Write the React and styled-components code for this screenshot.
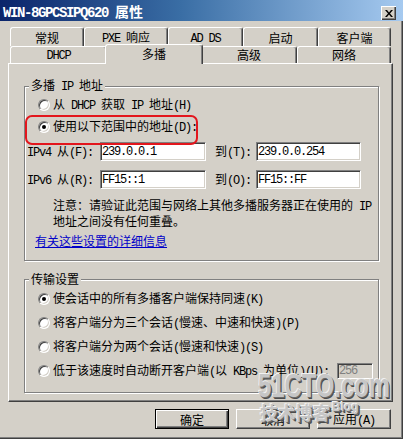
import React from "react";
import styled, { createGlobalStyle, css } from "styled-components";

const GlobalStyle = createGlobalStyle`
  html, body {
    margin: 0;
    padding: 0;
    background: #d4d0c8;
  }
  body {
    font-family: "Noto Sans CJK SC", "Liberation Sans", sans-serif;
    font-size: 12px;
    line-height: 14px;
    color: #000;
  }
`;

// latin runs are drawn half-width, like the old bitmap song font
const Latin = styled.span`
  font-family: "Liberation Mono", "DejaVu Sans Mono", monospace;
  letter-spacing: -0.1em;
`;

const asciiRun = /([\x20-\x7e]+)/;
const mix = (str) =>
  str
    .split(asciiRun)
    .filter(Boolean)
    .map((part, i) =>
      asciiRun.test(part) ? (
        <Latin key={i}>{part}</Latin>
      ) : (
        <React.Fragment key={i}>{part}</React.Fragment>
      )
    );

const Window = styled.div`
  position: relative;
  width: 403px;
  height: 439px;
  box-sizing: border-box;
  background: #d4d0c8;
  display: flex;
  flex-direction: column;
  overflow: hidden;
  box-shadow: inset -1px -1px 0 #404040, inset -2px -2px 0 #808080;
`;

const TitleBar = styled.div`
  height: 21px;
  box-sizing: border-box;
  padding: 3px 0 0 3px;
  display: flex;
  align-items: center;
  justify-content: space-between;
  background: linear-gradient(to right, #0a246a 0%, #3a6ea5 45%, #a6caf0 100%);
  color: #fff;
  font-weight: bold;
  font-size: 14px;
`;

const CloseButton = styled.div`
  width: 15px;
  height: 14px;
  margin: 2px 7px 0 0;
  box-sizing: border-box;
  display: flex;
  align-items: center;
  justify-content: center;
  background: #d4d0c8;
  box-shadow: inset 1px 1px 0 #fff, inset -1px -1px 0 #404040,
    inset -2px -2px 0 #808080;
`;

const Body = styled.div`
  padding: 6px 10px 0 8px;
  display: flex;
  flex-direction: column;
`;

const TabStrip = styled.div`
  padding: 0 2px;
  display: flex;
  flex-direction: column;
`;

const TabRow = styled.div`
  display: flex;
  height: ${(p) => p.$h}px;
`;

const Tab = styled.div`
  box-sizing: border-box;
  width: ${(p) => p.$w}px;
  height: 100%;
  display: flex;
  align-items: center;
  justify-content: center;
  padding-top: ${(p) => p.$pt || 0}px;
  background: #d4d0c8;
  border: 1px solid #fff;
  border-bottom: none;
  border-right-color: #404040;
  border-radius: 3px 3px 0 0;
  box-shadow: inset -1px 0 0 #808080;
  white-space: pre;
  ${(p) =>
    p.$active &&
    css`
      position: relative;
      z-index: 1;
      margin: -2px -2px 0;
      height: calc(100% + 3px);
      padding-bottom: 2px;
    `}
`;

const Panel = styled.div`
  box-sizing: border-box;
  width: 385px;
  height: 339px;
  padding: 14px 0 0 15px;
  border: 1px solid #fff;
  border-right-color: #404040;
  border-bottom-color: #404040;
  box-shadow: inset -1px -1px 0 #808080;
`;

const GroupBox = styled.fieldset`
  box-sizing: border-box;
  width: 355px;
  margin: ${(p) => p.$mt || 0}px 0 0;
  padding: ${(p) => p.$pt || 0}px 0 ${(p) => p.$pb}px 2px;
  border: 1px solid #808080;
  box-shadow: 1px 1px 0 #fff, inset 1px 1px 0 #fff;
  min-inline-size: 0;
`;

const Legend = styled.legend`
  margin-left: 2px;
  padding: 0 2px;
  background: #d4d0c8;
  line-height: 14px;
`;

const RadioRow = styled.div`
  position: relative;
  display: flex;
  align-items: center;
  height: ${(p) => p.$h}px;
  padding-left: 11px;
`;

const RadioDot = styled.span`
  box-sizing: border-box;
  flex: none;
  width: 12px;
  height: 12px;
  margin-right: 3px;
  border-radius: 50%;
  background: #fff;
  border: 1px solid;
  border-color: #808080 #fff #fff #808080;
  box-shadow: inset 1px 1px 0 #404040, inset -1px -1px 0 #d4d0c8;
  display: flex;
  align-items: center;
  justify-content: center;
  &::after {
    content: "";
    width: 4px;
    height: 4px;
    border-radius: 50%;
    background: ${(p) => (p.$checked ? "#000" : "transparent")};
  }
`;

const RedMark = styled.div`
  position: absolute;
  left: -2px;
  top: -1px;
  width: 173px;
  height: 30px;
  box-sizing: border-box;
  border: 2px solid #e3161d;
  border-radius: 7px;
  pointer-events: none;
`;

const FieldRow = styled.div`
  display: flex;
  align-items: center;
  height: 19px;
  margin-top: ${(p) => p.$mt}px;
`;

const FieldLabel = styled.span`
  flex: none;
  width: ${(p) => p.$w}px;
  margin-left: ${(p) => p.$ml || 0}px;
`;

const TextBox = styled.input`
  box-sizing: border-box;
  width: ${(p) => p.$w}px;
  height: ${(p) => p.$h || 19}px;
  margin: 0 0 0 ${(p) => p.$ml || 0}px;
  padding: 0 1px;
  font-family: "Liberation Mono", "DejaVu Sans Mono", monospace;
  font-size: 12px;
  letter-spacing: -1.2px;
  color: #000;
  background: #fff;
  border: 1px solid;
  border-color: #808080 #fff #fff #808080;
  box-shadow: inset 1px 1px 0 #404040, inset -1px -1px 0 #d4d0c8;
  outline: none;
  &:disabled {
    color: #808080;
    background: #d4d0c8;
  }
`;

const Note = styled.p`
  margin: 9px 0 0 26px;
  line-height: 14px;
`;

const HelpLink = styled.a`
  display: block;
  margin: 6px 0 0 8px;
  line-height: 14px;
  color: #0000c8;
  text-decoration: underline;
  cursor: pointer;
`;

const ButtonRow = styled.div`
  display: flex;
  justify-content: flex-end;
  gap: 7px;
  margin-top: 7px;
  padding-right: 2px;
`;

const Button = styled.button`
  box-sizing: border-box;
  width: 74px;
  height: 20px;
  padding: 0;
  font-family: "Noto Sans CJK SC", "Liberation Sans", sans-serif;
  font-size: 12px;
  color: #000;
  background: #d4d0c8;
  border: 1px solid;
  border-color: #fff #404040 #404040 #fff;
  box-shadow: inset -1px -1px 0 #808080;
  ${(p) =>
    p.$default &&
    css`
      border-color: #000;
      box-shadow: inset 1px 1px 0 #fff, inset -1px -1px 0 #404040,
        inset -2px -2px 0 #808080;
    `}
`;

const Watermark = styled.div`
  position: absolute;
  pointer-events: none;
  font-weight: bold;
  line-height: 1;
  white-space: nowrap;
  color: #c6c6c6;
  text-shadow: -1px -1px 0 #f2f2f2, 1px 1px 0 #6a6a6a, 2px 2px 0 #4c4c4c;
`;

const SiteMark = styled(Watermark)`
  left: 258px;
  top: 368px;
  font-family: "Liberation Sans", sans-serif;
  font-size: 34px;
  transform: scaleX(0.7);
  transform-origin: left top;
`;

const BlogMark = styled(Watermark)`
  left: 260px;
  top: 403px;
  font-size: 18px;
  letter-spacing: -0.5px;
`;

const BlogWord = styled(Watermark)`
  left: 332px;
  top: 401px;
  font-family: "Liberation Sans", sans-serif;
  font-size: 12px;
`;

const tabsTop = [
  { label: "常规", w: 74 },
  { label: "PXE 响应", w: 84 },
  { label: "AD DS", w: 75 },
  { label: "启动", w: 75 },
  { label: "客户端", w: 73 },
];

const tabsBottom = [
  { label: "DHCP", w: 97 },
  { label: "多播", w: 98, active: true },
  { label: "高级", w: 96 },
  { label: "网络", w: 94 },
];

const transferOptions = [
  { label: "使会话中的所有多播客户端保持同速(K)", checked: true },
  { label: "将客户端分为三个会话(慢速、中速和快速)(P)" },
  { label: "将客户端分为两个会话(慢速和快速)(S)" },
  { label: "低于该速度时自动断开客户端(以 KBps 为单位)(U):", limit: "256" },
];

const App = () => (
  <Window>
    <GlobalStyle />
    <TitleBar>
      <span>{mix("WIN-8GPCSIPQ620 属性")}</span>
      <CloseButton>
        <svg width="8" height="7" viewBox="0 0 8 7">
          <path d="M0 0h2l2 2.4L6 0h2L5 3.5 8 7H6L4 4.6 2 7H0l3-3.5z" fill="#000" />
        </svg>
      </CloseButton>
    </TitleBar>

    <Body>
      <TabStrip>
        <TabRow $h={19}>
          {tabsTop.map((t) => (
            <Tab key={t.label} $w={t.w} $pt={2}>
              <span>{mix(t.label)}</span>
            </Tab>
          ))}
        </TabRow>
        <TabRow $h={17}>
          {tabsBottom.map((t) => (
            <Tab key={t.label} $w={t.w} $active={t.active}>
              <span>{mix(t.label)}</span>
            </Tab>
          ))}
        </TabRow>
      </TabStrip>

      <Panel>
        <GroupBox $pb={12}>
          <Legend>{mix("多播 IP 地址")}</Legend>
          <RadioRow $h={22}>
            <RadioDot />
            <span>{mix("从 DHCP 获取 IP 地址(H)")}</span>
          </RadioRow>
          <RadioRow $h={22}>
            <RadioDot $checked />
            <span>{mix("使用以下范围中的地址(D):")}</span>
            <RedMark />
          </RadioRow>
          <FieldRow $mt={4}>
            <FieldLabel $w={73}>{mix("IPv4 从(F):")}</FieldLabel>
            <TextBox $w={106} readOnly value="239.0.0.1" />
            <FieldLabel $w={41} $ml={9}>{mix("到(T):")}</FieldLabel>
            <TextBox $w={105} readOnly value="239.0.0.254" />
          </FieldRow>
          <FieldRow $mt={9}>
            <FieldLabel $w={73}>{mix("IPv6 从(R):")}</FieldLabel>
            <TextBox $w={106} readOnly value="FF15::1" />
            <FieldLabel $w={41} $ml={9}>{mix("到(O):")}</FieldLabel>
            <TextBox $w={105} readOnly value="FF15::FF" />
          </FieldRow>
          <Note>
            {mix("注意：请验证此范围与网络上其他多播服务器正在使用的 IP")}
            <br />
            地址之间没有任何重叠。
          </Note>
          <HelpLink>有关这些设置的详细信息</HelpLink>
        </GroupBox>

        <GroupBox $mt={11} $pt={1} $pb={9}>
          <Legend>传输设置</Legend>
          {transferOptions.map((o) => (
            <RadioRow key={o.label} $h={24}>
              <RadioDot $checked={o.checked} />
              <span>{mix(o.label)}</span>
              {o.limit && (
                <TextBox $w={36} $h={16} $ml={8} disabled value={o.limit} readOnly />
              )}
            </RadioRow>
          ))}
        </GroupBox>
      </Panel>

      <ButtonRow>
        <Button $default>确定</Button>
        <Button>取消</Button>
        <Button>{mix("应用(A)")}</Button>
      </ButtonRow>
    </Body>

    <SiteMark>51CTO.com</SiteMark>
    <BlogMark>技术博客</BlogMark>
    <BlogWord>Blog</BlogWord>
  </Window>
);

export default App;
